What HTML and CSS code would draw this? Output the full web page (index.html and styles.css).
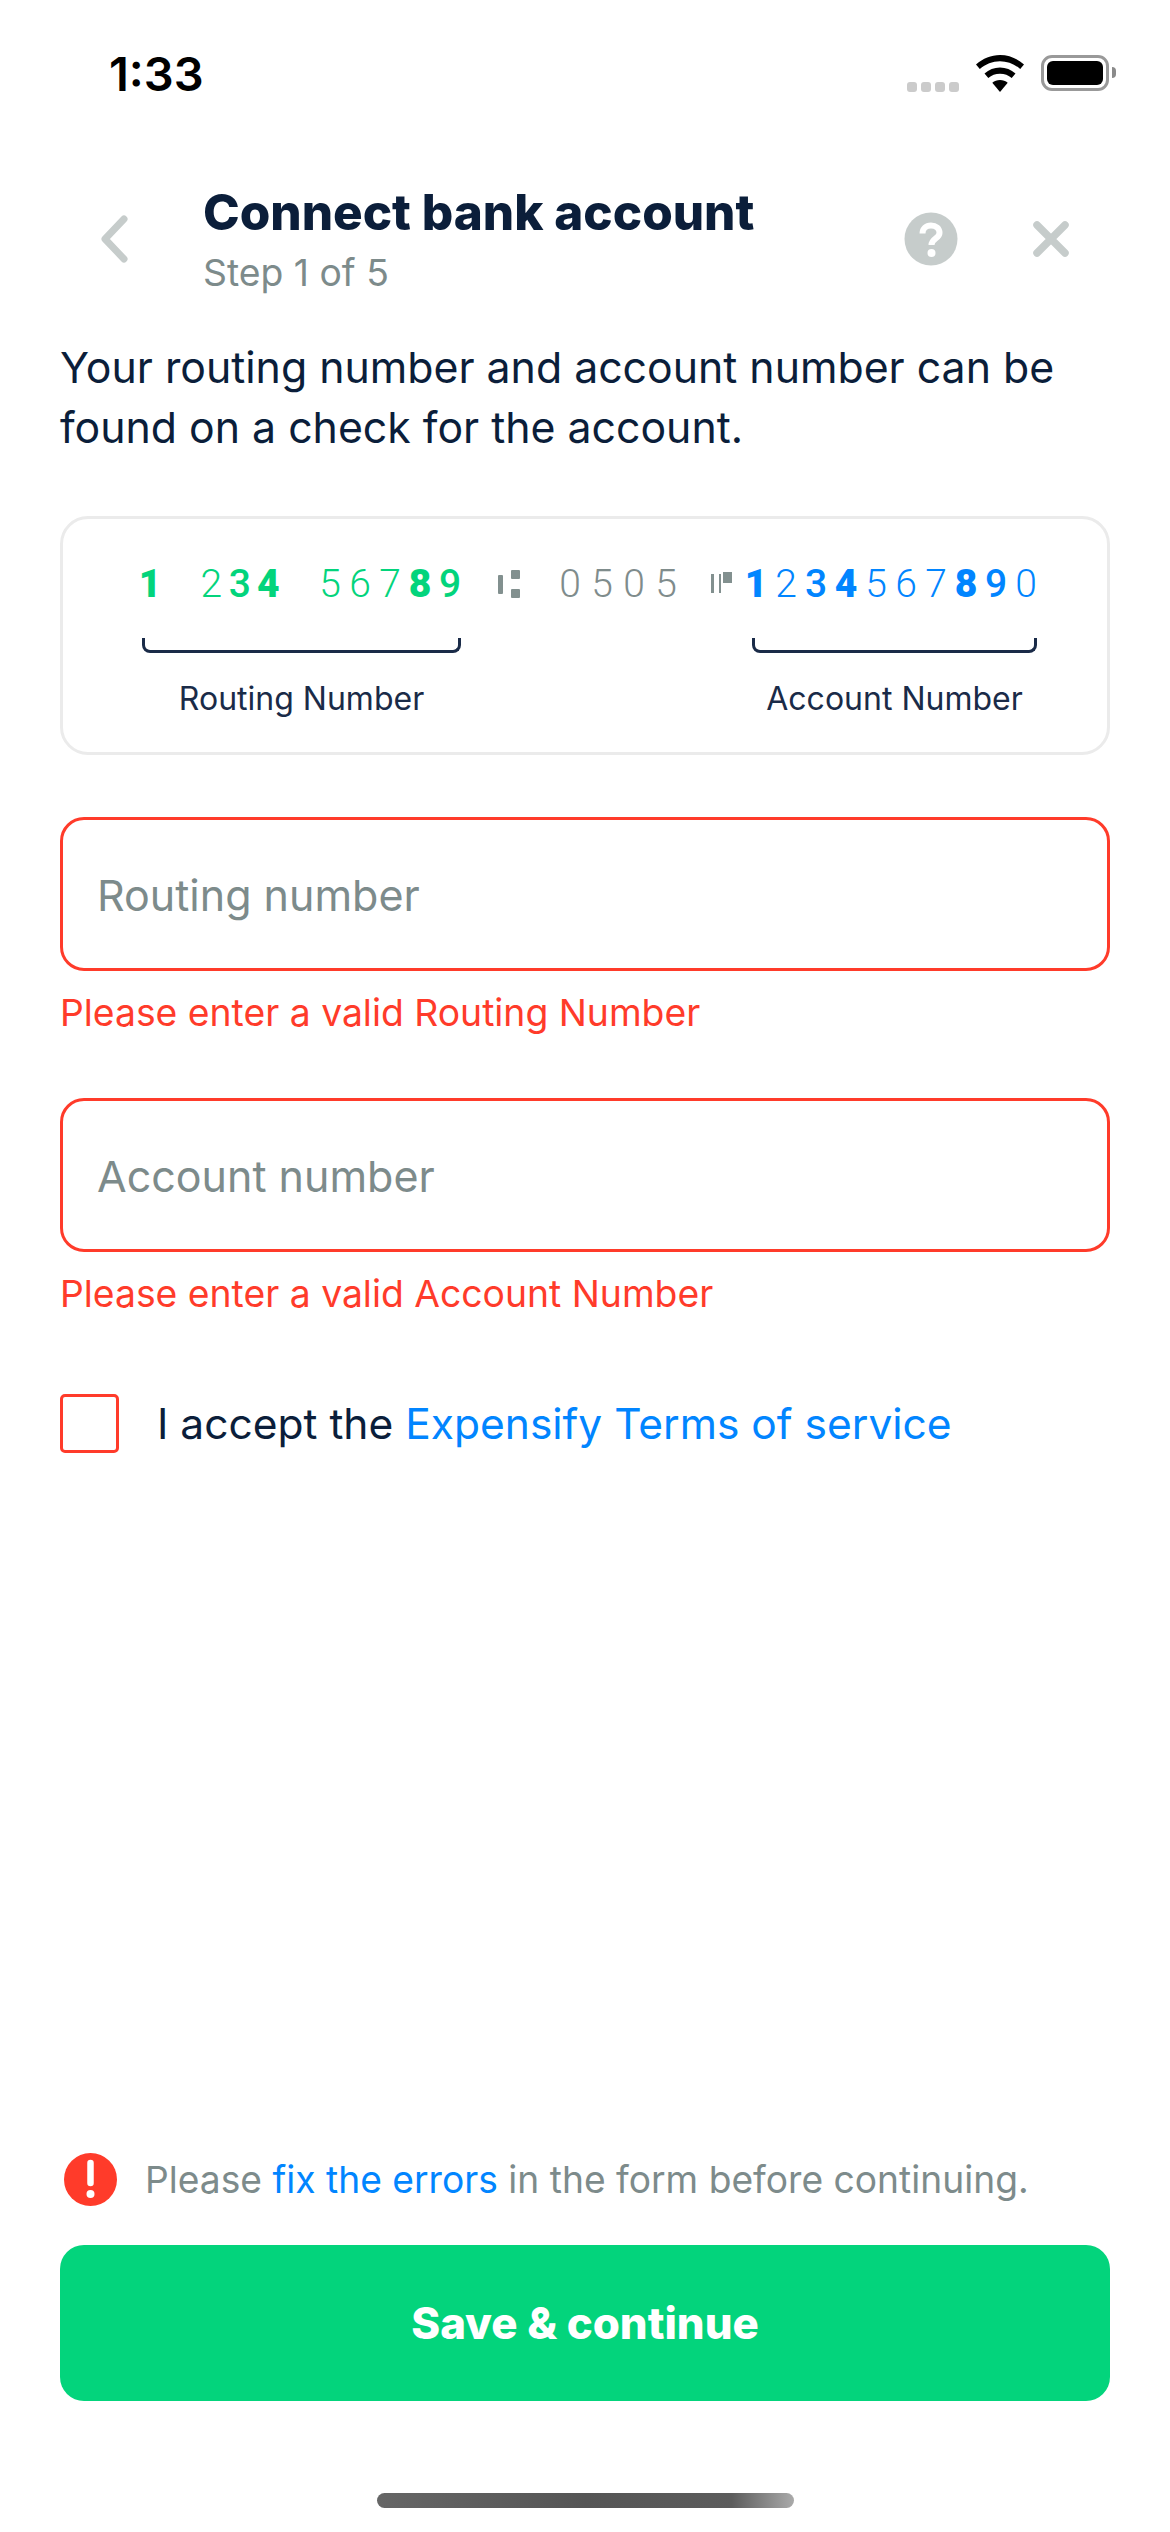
FILE: index.html
```html
<!DOCTYPE html>
<html lang="en">
<head>
<meta charset="utf-8">
<title>Connect bank account</title>
<link rel="stylesheet" href="styles.css">
</head>
<body>
<div class="page">
  <div class="status">
    <span class="time">1:33</span>
    <div class="status-icons">
      <div class="dots"><i></i><i></i><i></i><i></i></div>
      <svg class="wifi" width="48" height="37" viewBox="0 0 48 37"><path d="M24 0C15 0 7 3.400 0 9.500L3.800 14C9.500 9 16.500 6.200 24 6.200S38.500 9 44.200 14L48 9.500C41 3.400 33 0 24 0Z"/><path d="M24 12.500C18 12.500 13 14.600 8.500 18.500L12.300 23C15.500 20.200 19.500 18.700 24 18.700S32.500 20.200 35.700 23L39.500 18.500C35 14.600 30 12.500 24 12.500Z"/><path d="M24 25C21 25 18.500 26 16.300 27.800L24 37L31.700 27.800C29.500 26 27 25 24 25Z"/></svg>
      <div class="battery"><div class="battery-level"></div></div>
      <div class="battery-nub"></div>
    </div>
  </div>

  <header class="header">
    <svg class="chevron" width="28" height="48" viewBox="0 0 28 48"><path d="M24 4L5 24L24 44" fill="none" stroke="#c6cccb" stroke-width="7" stroke-linecap="round" stroke-linejoin="round"/></svg>
    <div class="titles">
      <h1 class="title">Connect bank account</h1>
      <div class="step">Step 1 of 5</div>
    </div>
    <svg class="help" width="54" height="54" viewBox="0 0 54 54"><circle cx="27" cy="27" r="26.500" fill="#c6cccb"/><path d="M18.500 21.500C18.500 16.500 22 13.500 27 13.500S35.500 16.500 35.500 21C35.500 26.500 27.500 26.500 27.500 33" fill="none" stroke="#fff" stroke-width="6"/><circle cx="27.500" cy="41" r="4" fill="#fff"/></svg>
    <svg class="close" width="36" height="36" viewBox="0 0 36 36"><path d="M4 4L32 32M32 4L4 32" fill="none" stroke="#c6cccb" stroke-width="7.500" stroke-linecap="round"/></svg>
  </header>

  <main class="content">
    <p class="intro">Your routing number and account number can be found on a check for the account.</p>

    <section class="check">
      <div class="micr">
        <div class="group green first"><span class="bold">1</span></div>
        <div class="group green routing-a"><span>2</span><span class="semi">3</span><span class="bold">4</span></div>
        <div class="group green routing-b"><span>5</span><span>6</span><span>7</span><span class="bold">8</span><span class="semi">9</span></div>
        <div class="transit"><i class="bar"></i><div class="squares"><i></i><i></i></div></div>
        <div class="group grey branch"><span>0</span><span>5</span><span>0</span><span>5</span></div>
        <div class="onus"><i></i><i></i><b></b></div>
        <div class="group blue account"><span class="bold">1</span><span>2</span><span class="semi">3</span><span class="bold">4</span><span>5</span><span>6</span><span>7</span><span class="bold">8</span><span class="semi">9</span><span>0</span></div>
      </div>
      <div class="legend">
        <div class="legend-item routing-legend"><div class="bracket"></div><div class="legend-label">Routing Number</div></div>
        <div class="legend-item account-legend"><div class="bracket"></div><div class="legend-label">Account Number</div></div>
      </div>
    </section>

    <div class="field"><span class="placeholder">Routing number</span></div>
    <div class="error">Please enter a valid Routing Number</div>
    <div class="field field-next"><span class="placeholder">Account number</span></div>
    <div class="error">Please enter a valid Account Number</div>

    <div class="terms">
      <div class="checkbox"></div>
      <div class="terms-text">I accept the <a class="link">Expensify Terms of service</a></div>
    </div>
  </main>

  <footer class="footer">
    <div class="notice">
      <svg class="alert" width="53" height="53" viewBox="0 0 53 53"><circle cx="26.500" cy="26.500" r="26.500" fill="#ff3b2a"/><path d="M26.500 10V30" stroke="#fff" stroke-width="6.500" stroke-linecap="round"/><circle cx="26.500" cy="41" r="4" fill="#fff"/></svg>
      <div class="notice-text">Please <a class="link">fix the errors</a> in the form before continuing.</div>
    </div>
    <button class="cta">Save &amp; continue</button>
    <div class="home"></div>
  </footer>
</div>
</body>
</html>
```
FILE: styles.css
```css
* { box-sizing: border-box; }
html, body { margin: 0; padding: 0; background: #fff; }
.page {
  width: 1170px; height: 2532px; display: flex; flex-direction: column;
  overflow: hidden; background: #fff; color: #0b1e3a;
  font-family: Inter, "Liberation Sans", sans-serif;
}
.status { height: 148px; flex: none; display: flex; align-items: center; justify-content: space-between; padding: 0 54px 0 109px; }
.time { font-family: Inter, sans-serif; font-size: 47px; font-weight: 600; color: #000; line-height: 56px; }
.status-icons { display: flex; align-items: flex-start; height: 37px; margin-top: -1px; }
.dots { display: flex; gap: 4px; margin-top: 27px; margin-right: 17px; }
.dots i { width: 10px; height: 10px; border-radius: 3px; background: #cbcbcb; display: block; }
.wifi { margin-right: 17px; fill: #000; }
.battery { width: 68px; height: 36px; border: 3px solid #999; border-radius: 11px; padding: 3px; }
.battery-level { width: 100%; height: 100%; background: #000; border-radius: 6px; }
.battery-nub { width: 4px; height: 11px; margin: 12px 0 0 3px; background: #8a8a8a; border-radius: 0 4px 4px 0; }

.header { margin-top: 34px; height: 114px; flex: none; display: flex; align-items: center; padding: 0 101px 0 100px; }
.chevron { flex: none; }
.titles { margin-left: 75px; flex: 1; padding-top: 3px; }
.title { margin: 0; font-size: 49.400px; font-weight: 800; line-height: 60px; color: #0b1e3a; }
.step { margin-top: 4px; font-size: 37.300px; line-height: 53px; color: #7d8b8b; }
.help { flex: none; margin-right: 75px; }
.close { flex: none; }

.content { padding: 0 60px; }
.intro { margin: 42px 0 58px; font-size: 42.800px; line-height: 60px; color: #0b1e3a; }

.check { height: 239px; border: 3px solid #ebebeb; border-radius: 28px; }
.micr { display: flex; align-items: center; height: 30px; margin-top: 50px; font-family: Roboto, sans-serif; font-size: 39px; font-weight: 300; line-height: 30px; }
.group { display: flex; }
.group span { display: block; text-align: center; }
.group .bold { font-weight: 900; }
.group .semi { font-weight: 500; }
.green { color: #03d47c; }
.grey { color: #7f8c8c; }
.blue { color: #0185ff; }
.first { margin-left: 72px; }
.first span { width: 30px; }
.routing-a { margin-left: 32px; }
.routing-a span { width: 28.500px; }
.routing-b { margin-left: 32.500px; }
.routing-b span { width: 30px; }
.transit { margin-left: 33px; width: 22px; height: 28px; display: flex; align-items: center; justify-content: space-between; flex: none; }
.transit .bar { display: block; width: 5px; height: 19px; background: #82908f; border-radius: 1px; }
.squares { display: flex; flex-direction: column; justify-content: space-between; height: 28px; }
.squares i { display: block; width: 9px; height: 9px; background: #82908f; border-radius: 1px; }
.branch { margin-left: 34px; }
.branch span { width: 32px; }
.onus { margin-left: 29px; width: 21px; height: 28px; display: flex; flex: none; }
.onus i { display: block; width: 2.500px; height: 19px; margin: 4px 5px 0 0; background: #82908f; }
.onus b { display: block; width: 9px; height: 11px; margin: 2px 0 0 -3px; background: #82908f; }
.account { margin-left: 9px; }
.account span { width: 30px; }

.legend { height: 100px; margin-top: 39px; display: flex; }
.legend-item { display: flex; flex-direction: column; align-items: center; }
.routing-legend { width: 319px; margin-left: 79px; }
.account-legend { width: 285px; margin-left: 291px; }
.bracket { width: 100%; height: 15px; border: 3px solid #1a2b48; border-top: none; border-radius: 0 0 8px 8px; }
.legend-label { margin-top: 26px; font-size: 32px; line-height: 40px; color: #1a2b48; white-space: nowrap; }

.field { margin-top: 62px; height: 154px; border: 3px solid #ff3b2a; border-radius: 24px; display: flex; align-items: center; padding: 2px 0 0 34px; }
.field-next { margin-top: 60px; }
.placeholder { font-size: 43px; color: #7d8b8b; }
.error { margin-top: 17px; font-size: 37.300px; line-height: 50px; color: #ff3b2a; }

.terms { margin-top: 73px; display: flex; align-items: center; }
.checkbox { width: 59px; height: 59px; border: 3px solid #ff3b2a; border-radius: 5px; }
.terms-text { margin-left: 38px; padding-top: 2px; font-size: 42.500px; line-height: 60px; color: #0b1e3a; }
.link { color: #0185ff; }

.footer { margin-top: auto; padding: 0 60px 24px; display: flex; flex-direction: column; }
.notice { display: flex; align-items: center; height: 53px; padding-left: 4px; }
.alert { flex: none; }
.notice-text { margin-left: 28px; padding-top: 1px; font-size: 37.200px; line-height: 50px; color: #7d8b8b; white-space: nowrap; }
.cta { margin-top: 39px; height: 156px; border: none; border-radius: 24px; background: #03d47c; color: #fff; font-family: Inter, sans-serif; font-size: 43.800px; font-weight: 800; }
.home { margin: 92px auto 0; width: 417px; height: 15px; border-radius: 8px; background: linear-gradient(90deg, #666 0%, #555 50%, #5c5c5c 85%, #aaa 100%); }
```
